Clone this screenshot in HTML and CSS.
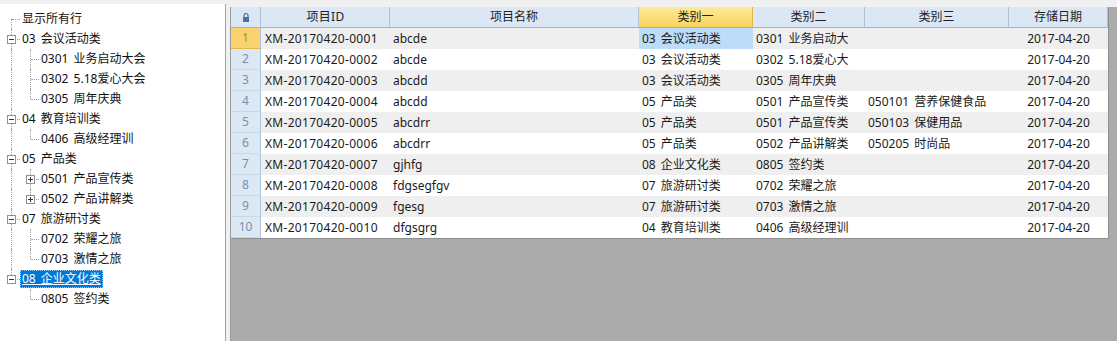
FILE: index.html
```html
<!DOCTYPE html>
<html lang="zh-CN">
<head>
  <meta charset="UTF-8" />
  <title>项目分类</title>
  <link rel="stylesheet" href="styles.css">
</head>
<body>

<div class="main">
  <!-- left: category tree -->
  <div class="tree">
    <div class="node"><span class="seg first"></span><span class="label">显示所有行</span></div>
    <div class="node"><span class="seg tee"><i class="box"></i></span><span class="label">03 会议活动类</span></div>
    <div class="node"><span class="seg pipe"></span><span class="seg tee"></span><span class="label">0301 业务启动大会</span></div>
    <div class="node"><span class="seg pipe"></span><span class="seg tee"></span><span class="label">0302 5.18爱心大会</span></div>
    <div class="node"><span class="seg pipe"></span><span class="seg ell"></span><span class="label">0305 周年庆典</span></div>
    <div class="node"><span class="seg tee"><i class="box"></i></span><span class="label">04 教育培训类</span></div>
    <div class="node"><span class="seg pipe"></span><span class="seg ell"></span><span class="label">0406 高级经理训</span></div>
    <div class="node"><span class="seg tee"><i class="box"></i></span><span class="label">05 产品类</span></div>
    <div class="node"><span class="seg pipe"></span><span class="seg tee"><i class="box plus"></i></span><span class="label">0501 产品宣传类</span></div>
    <div class="node"><span class="seg pipe"></span><span class="seg ell"><i class="box plus"></i></span><span class="label">0502 产品讲解类</span></div>
    <div class="node"><span class="seg tee"><i class="box"></i></span><span class="label">07 旅游研讨类</span></div>
    <div class="node"><span class="seg pipe"></span><span class="seg tee"></span><span class="label">0702 荣耀之旅</span></div>
    <div class="node"><span class="seg pipe"></span><span class="seg ell"></span><span class="label">0703 激情之旅</span></div>
    <div class="node"><span class="seg ell"><i class="box"></i></span><span class="label selected">08 企业文化类</span></div>
    <div class="node"><span class="seg"></span><span class="seg ell"></span><span class="label">0805 签约类</span></div>
  </div>

  <!-- right: data grid -->
  <div class="grid-area">
    <div class="grid">
      <div class="row head">
        <div class="cell corner">
          <svg width="8" height="9" viewBox="0 0 8 9">
            <path d="M2 4 V2.5 A2 2 0 0 1 6 2.5 V4" fill="none" stroke="#4f6fa8" stroke-width="1.2"/>
            <rect x="1" y="4" width="6" height="5" fill="#4f6fa8"/>
          </svg>
        </div>
        <div class="cell">项目ID</div>
        <div class="cell">项目名称</div>
        <div class="cell sel">类别一</div>
        <div class="cell">类别二</div>
        <div class="cell">类别三</div>
        <div class="cell">存储日期</div>
      </div>

      <div class="row odd">
        <div class="cell num cur">1</div>
        <div class="cell">XM-20170420-0001</div>
        <div class="cell">abcde</div>
        <div class="cell focus">03 会议活动类</div>
        <div class="cell">0301 业务启动大</div>
        <div class="cell"></div>
        <div class="cell date">2017-04-20</div>
      </div>
      <div class="row">
        <div class="cell num">2</div>
        <div class="cell">XM-20170420-0002</div>
        <div class="cell">abcde</div>
        <div class="cell">03 会议活动类</div>
        <div class="cell">0302 5.18爱心大</div>
        <div class="cell"></div>
        <div class="cell date">2017-04-20</div>
      </div>
      <div class="row odd">
        <div class="cell num">3</div>
        <div class="cell">XM-20170420-0003</div>
        <div class="cell">abcdd</div>
        <div class="cell">03 会议活动类</div>
        <div class="cell">0305 周年庆典</div>
        <div class="cell"></div>
        <div class="cell date">2017-04-20</div>
      </div>
      <div class="row">
        <div class="cell num">4</div>
        <div class="cell">XM-20170420-0004</div>
        <div class="cell">abcdd</div>
        <div class="cell">05 产品类</div>
        <div class="cell">0501 产品宣传类</div>
        <div class="cell">050101 营养保健食品</div>
        <div class="cell date">2017-04-20</div>
      </div>
      <div class="row odd">
        <div class="cell num">5</div>
        <div class="cell">XM-20170420-0005</div>
        <div class="cell">abcdrr</div>
        <div class="cell">05 产品类</div>
        <div class="cell">0501 产品宣传类</div>
        <div class="cell">050103 保健用品</div>
        <div class="cell date">2017-04-20</div>
      </div>
      <div class="row">
        <div class="cell num">6</div>
        <div class="cell">XM-20170420-0006</div>
        <div class="cell">abcdrr</div>
        <div class="cell">05 产品类</div>
        <div class="cell">0502 产品讲解类</div>
        <div class="cell">050205 时尚品</div>
        <div class="cell date">2017-04-20</div>
      </div>
      <div class="row odd">
        <div class="cell num">7</div>
        <div class="cell">XM-20170420-0007</div>
        <div class="cell">gjhfg</div>
        <div class="cell">08 企业文化类</div>
        <div class="cell">0805 签约类</div>
        <div class="cell"></div>
        <div class="cell date">2017-04-20</div>
      </div>
      <div class="row">
        <div class="cell num">8</div>
        <div class="cell">XM-20170420-0008</div>
        <div class="cell">fdgsegfgv</div>
        <div class="cell">07 旅游研讨类</div>
        <div class="cell">0702 荣耀之旅</div>
        <div class="cell"></div>
        <div class="cell date">2017-04-20</div>
      </div>
      <div class="row odd">
        <div class="cell num">9</div>
        <div class="cell">XM-20170420-0009</div>
        <div class="cell">fgesg</div>
        <div class="cell">07 旅游研讨类</div>
        <div class="cell">0703 激情之旅</div>
        <div class="cell"></div>
        <div class="cell date">2017-04-20</div>
      </div>
      <div class="row">
        <div class="cell num">10</div>
        <div class="cell">XM-20170420-0010</div>
        <div class="cell">dfgsgrg</div>
        <div class="cell">04 教育培训类</div>
        <div class="cell">0406 高级经理训</div>
        <div class="cell"></div>
        <div class="cell date">2017-04-20</div>
      </div>
    </div>
  </div>
</div>

</body>
</html>
```

FILE: styles.css
```css
body {
  margin: 0;
  background-color: #f0f0f0;
  font-family: "Noto Sans", "Noto Sans CJK SC", sans-serif;
  font-size: 12px;
  word-spacing: 2px;
  color: #1a1a1a;
}

.main {
  display: flex;
  gap: 4px;
  height: 341px;
  overflow: hidden;
}

/* tree */

.tree {
  width: 226px;
  flex: none;
  box-sizing: border-box;
  margin-top: 4px;
  padding-top: 5px;
  background: white;
  border-right: 1px solid #a0a0a0;
}

.node {
  display: flex;
  align-items: center;
  height: 20px;
}

.seg {
  position: relative;
  flex: none;
  width: 19px;
  height: 20px;
}

.seg::before,
.seg::after {
  content: '';
  position: absolute;
}

.pipe::before,
.tee::before {
  left: 11px;
  top: 0;
  bottom: 0;
  border-left: 1px dotted #a0a0a0;
}

.ell::before {
  left: 11px;
  top: 0;
  height: 10px;
  border-left: 1px dotted #a0a0a0;
}

.first::before {
  left: 11px;
  top: 10px;
  bottom: 0;
  border-left: 1px dotted #a0a0a0;
}

.tee::after,
.ell::after,
.first::after {
  left: 12px;
  top: 10px;
  width: 8px;
  border-top: 1px dotted #a0a0a0;
}

.box {
  position: absolute;
  left: 7px;
  top: 6px;
  width: 9px;
  height: 9px;
  box-sizing: border-box;
  border: 1px solid #919191;
  background: white;
  z-index: 1;
}

.box::before {
  content: '';
  position: absolute;
  left: 1px;
  top: 3px;
  width: 5px;
  height: 1px;
  background: #3a3a3a;
}

.box.plus::after {
  content: '';
  position: absolute;
  left: 3px;
  top: 1px;
  width: 1px;
  height: 5px;
  background: #3a3a3a;
}

.label {
  margin-left: 1px;
  padding: 0 2px;
  line-height: 18px;
  white-space: nowrap;
  color: #111;
}

.label.selected {
  background: #0078d7;
  color: white;
  text-decoration: underline;
  outline: 1px dotted #99c9ef;
  outline-offset: -1px;
}

/* grid */

.grid-area {
  flex: 1;
  margin-top: 7px;
  background: #ababab;
  border-left: 1px solid #9a9a9a;
}

.grid {
  width: 877px;
  box-shadow: 1px 1px 0 #8e8e8e;
}

.row {
  display: grid;
  grid-template-columns: 30px 129px 249px 114px 112px 144px 99px;
  height: 21px;
  background: white;
}

.row.odd {
  background: #efefef;
}

.cell {
  box-sizing: border-box;
  padding: 0 3px;
  line-height: 21px;
  white-space: nowrap;
  overflow: hidden;
}

.row .cell:nth-child(2) {
  padding-left: 4px;
  letter-spacing: 0.3px;
}

.head .cell {
  background: #dce7f5;
  border-right: 1px solid #aec2da;
  border-bottom: 1px solid #9db3cc;
  line-height: 20px;
  text-align: center;
  color: #222;
  letter-spacing: 0;
}

.head .corner {
  display: flex;
  justify-content: center;
  align-items: center;
  padding-top: 1px;
}

.head .cell.sel {
  background: linear-gradient(#fee999, #f9d35e);
  border-right-color: #e5b54a;
  border-bottom-color: #e5a930;
}

.cell.num {
  background: #dde8f5;
  border-right: 1px solid #aec2da;
  border-bottom: 1px solid #c9d7e8;
  line-height: 20px;
  text-align: center;
  color: #7890b2;
}

.cell.num.cur {
  background: #f9d46e;
  border-bottom-color: #e8b84e;
  color: #a58a4c;
}

.cell.focus {
  background: #bddcf8;
}

.cell.date {
  text-align: center;
}
```
